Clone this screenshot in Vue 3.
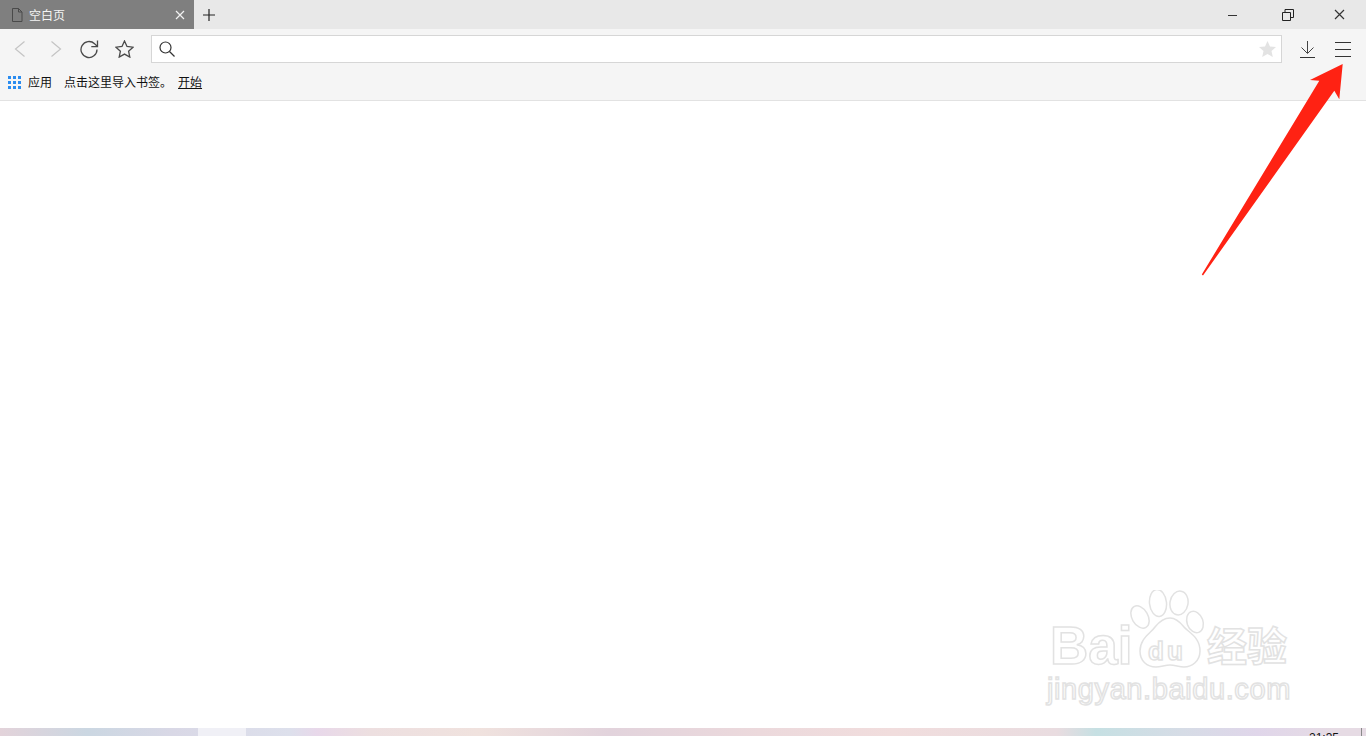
<template>
  <div class="screen">
    <div class="tabstrip">
      <div class="tab">
        <svg class="tab-icon" width="12" height="14" viewBox="0 0 12 14">
          <path d="M1.500 .5h6l3.500 3.500v9.500h-9.500zM7.500 .5v3.500h3.500" fill="none" stroke="#4a4a4a" />
        </svg>
        <span class="tab-title">空白页</span>
        <svg class="tab-close" width="10" height="10" viewBox="0 0 10 10">
          <path d="M1 1l8 8M9 1l-8 8" stroke="#f2f2f2" stroke-width="1.200" />
        </svg>
      </div>
      <svg class="new-tab" width="12" height="12" viewBox="0 0 12 12">
        <path d="M6 0v12M0 6h12" stroke="#222" stroke-width="1.200" />
      </svg>
      <div class="win-btns">
        <svg class="win-min" width="10" height="10" viewBox="0 0 10 10"><path d="M0 5.500h9" stroke="#333" /></svg>
        <svg class="win-max" width="12" height="12" viewBox="0 0 12 12">
          <path d="M.5 3.500h8v8h-8zM3 3.500v-3h8.500v8h-3" fill="none" stroke="#222" />
        </svg>
        <svg class="win-close" width="11" height="11" viewBox="0 0 11 11">
          <path d="M1 1l9 9M10 1l-9 9" stroke="#333" stroke-width="1.200" />
        </svg>
      </div>
    </div>

    <div class="toolbar">
      <svg width="12" height="16" viewBox="0 0 12 16" class="nav-back">
        <path d="M10.500 .5l-9 7.500 9 7.500" fill="none" stroke="#c4c4c4" stroke-width="1.200" />
      </svg>
      <svg width="12" height="16" viewBox="0 0 12 16" class="nav-fwd">
        <path d="M1.500 .5l9 7.500-9 7.500" fill="none" stroke="#c4c4c4" stroke-width="1.200" />
      </svg>
      <svg width="19" height="19" viewBox="0 0 19 19" class="nav-reload">
        <path d="M17 9.500a8 8 0 1 1-2.400-5.700L17 6" fill="none" stroke="#4a4a4a" stroke-width="1.300" />
        <path d="M17.500 .5v6.200h-6.200" fill="none" stroke="#4a4a4a" stroke-width="1.300" />
      </svg>
      <svg width="19" height="18" viewBox="0 0 19 18" class="nav-star">
        <path d="M9.500 1l2.500 5.500 6 .7-4.400 4 1.200 5.900-5.300-3-5.300 3 1.200-5.900-4.400-4 6-.7z" fill="none" stroke="#4a4a4a" stroke-width="1.300" />
      </svg>
      <div class="address">
        <svg width="16" height="16" viewBox="0 0 16 16">
          <circle cx="6.500" cy="6.500" r="5.500" fill="none" stroke="#333" stroke-width="1.200" />
          <path d="M10.500 10.500l5 5" stroke="#333" stroke-width="1.200" />
        </svg>
        <svg width="17" height="16" viewBox="0 0 17 16">
          <path d="M8.500 0l2.500 5.500 6 .6-4.500 4 1.300 5.900-5.300-3-5.300 3 1.300-5.900-4.500-4 6-.6z" fill="#e3e3e3" />
        </svg>
      </div>
      <svg width="15" height="17" viewBox="0 0 15 17" class="download">
        <path d="M7.500 0v12M1.500 6.500l6 6 6-6" fill="none" stroke="#444" />
        <path d="M0 16.500h15" stroke="#333" />
      </svg>
      <svg width="16" height="15" viewBox="0 0 16 15" class="menu">
        <path d="M0 .5h16M0 7.500h16M0 14.500h16" stroke="#333" />
      </svg>
    </div>

    <div class="bookmarks">
      <span class="apps-grid">
        <i v-for="n in 9" :key="n"></i>
      </span>
      <span class="bm apps-label">应用</span>
      <span class="bm import">点击这里导入书签。</span>
      <span class="bm start">开始</span>
    </div>

    <main class="page"></main>

    <div class="taskbar">
      <div class="task-active"></div>
      <span class="clock">21:35</span>
      <span class="show-desktop"></span>
    </div>

    <div class="watermark">
      <span class="wm-bai">Bai</span>
      <svg class="paw" width="75" height="85" viewBox="0 0 75 85">
        <g fill="#fff" stroke="#e2e2e2" stroke-width="1.500">
          <ellipse cx="10" cy="27" rx="8" ry="12" transform="rotate(-30 10 27)" />
          <ellipse cx="28" cy="13" rx="8.500" ry="13.500" transform="rotate(-6 28 13)" />
          <ellipse cx="49" cy="13" rx="9" ry="12" transform="rotate(10 49 13)" />
          <ellipse cx="65" cy="32" rx="8" ry="11" transform="rotate(-20 65 32)" />
          <path d="M40 28c6 0 10 4 14 9 4 5 16 10 16 24 0 10-8 16-16 16-5 0-9-2-14-2-5 0-9 2-14 2-9 0-16-6-16-16 0-13 11-18 15-24 4-5 9-9 15-9z" />
        </g>
      </svg>
      <span class="wm-du">du</span>
      <span class="wm-cn">经验</span>
      <span class="wm-url">jingyan.baidu.com</span>
    </div>

    <svg class="arrow" width="1366" height="736" viewBox="0 0 1366 736">
      <polygon points="1342.700,64 1310,80 1319.300,80.700 1201.800,274.500 1203,275.500 1334.300,90.700 1339.300,99.300" fill="#ff2213" />
    </svg>
  </div>
</template>

<script setup>
</script>

<style>
html, body {
  margin: 0;
  overflow: hidden;
}
</style>

<style scoped>
.screen {
  position: relative;
  width: 1366px;
  height: 736px;
  display: flex;
  flex-direction: column;
  background: #fff;
  font-family: "Noto Sans CJK SC", "Liberation Sans", sans-serif;
  overflow: hidden;
}
.tabstrip {
  height: 29px;
  display: flex;
  align-items: center;
  background: #e8e8e8;
}
.tab {
  width: 194px;
  height: 29px;
  display: flex;
  align-items: center;
  box-sizing: border-box;
  padding: 0 9px 0 11px;
  background: #7f7f7f;
}
.tab-title {
  margin-left: 6px;
  flex: 1;
  color: #f4f4f4;
  font-size: 12px;
}
.new-tab {
  margin-left: 9px;
}
.win-btns {
  margin-left: auto;
  padding-right: 21px;
  display: flex;
  align-items: center;
}
.win-max {
  margin-left: 44px;
}
.win-close {
  margin-left: 40px;
}
.toolbar {
  height: 40px;
  display: flex;
  align-items: center;
  background: #f5f5f5;
}
.nav-back {
  margin-left: 14px;
}
.nav-fwd {
  margin-left: 24px;
}
.nav-reload {
  margin-left: 18px;
}
.nav-star {
  margin-left: 16px;
}
.address {
  width: 1131px;
  height: 28px;
  margin-left: 17px;
  padding: 0 5px 0 7px;
  display: flex;
  align-items: center;
  justify-content: space-between;
  box-sizing: border-box;
  border: 1px solid #d6d6d6;
  background: #fff;
}
.download {
  margin-left: 18px;
}
.menu {
  margin-left: 20px;
}
.bookmarks {
  height: 32px;
  display: flex;
  align-items: center;
  box-sizing: border-box;
  border-bottom: 1px solid #e2e2e2;
  padding: 0 0 4px 8px;
  background: #f5f5f5;
}
.apps-grid {
  width: 13px;
  display: grid;
  grid-template-columns: repeat(3, 3px);
  gap: 2px;
}
.apps-grid i {
  height: 3px;
  background: #2a8cf0;
}
.bm {
  margin-bottom: 2px;
  color: #111;
  font-size: 12px;
}
.apps-label {
  margin-left: 7px;
}
.import {
  margin-left: 12px;
}
.start {
  margin-left: 6px;
  text-decoration: underline;
}
.page {
  flex: 1;
  background: #fff;
}
.taskbar {
  position: relative;
  height: 8px;
  background: linear-gradient(90deg, #e3d3da 0, #cbd7e2 87px, #d9d8e6 174px, #dde0ec 290px, #e8d8ea 317px, #eddfe0 370px, #f0e2de 478px, #e2d3dc 609px, #ecd9dc 760px, #f1dddd 892px, #e9dce0 1057px, #c6e0e3 1096px, #d6dce6 1183px, #e0d6ea 1257px, #e6dbe4 1335px);
  overflow: hidden;
}
.task-active {
  position: absolute;
  left: 198px;
  top: 0;
  width: 48px;
  height: 8px;
  background: #f0f0f6;
}
.clock {
  position: absolute;
  left: 1309px;
  top: 3px;
  color: #111;
  font: 12px/14px "Liberation Sans", sans-serif;
}
.show-desktop {
  position: absolute;
  left: 1361px;
  top: 0;
  width: 1px;
  height: 8px;
  background: #8a8a8a;
}
.watermark {
  position: absolute;
  left: 1046px;
  top: 588px;
  width: 250px;
  height: 120px;
  font-family: "Liberation Sans", sans-serif;
}
.watermark span {
  position: absolute;
  color: #fff;
  -webkit-text-stroke: 1.500px #e2e2e2;
}
.paw {
  position: absolute;
  left: 84px;
  top: 2px;
}
.wm-bai {
  left: 4px;
  top: 28px;
  font-size: 53px;
  line-height: 60px;
  font-weight: 700;
}
.wm-du {
  left: 102px;
  top: 48px;
  font-size: 26px;
  line-height: 30px;
  font-weight: 700;
  letter-spacing: 3px;
}
.wm-cn {
  left: 161px;
  top: 32px;
  font-family: "Noto Sans CJK SC", sans-serif;
  font-size: 40px;
  line-height: 48px;
  font-weight: 700;
}
.wm-url {
  left: 1px;
  top: 84px;
  font-size: 29px;
  line-height: 34px;
  letter-spacing: .6px;
}
.arrow {
  position: absolute;
  left: 0;
  top: 0;
  pointer-events: none;
}
</style>
